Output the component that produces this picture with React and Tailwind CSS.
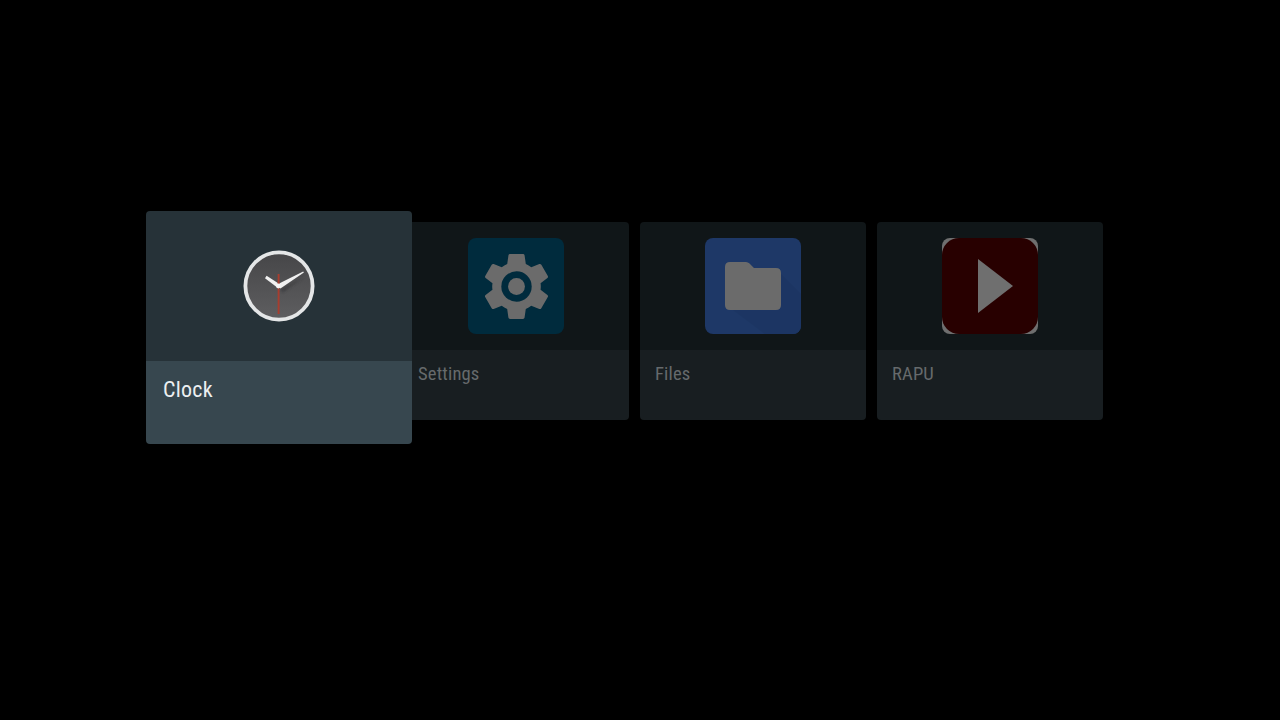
const GEAR = "M19.14 12.94c.04-.3.06-.61.06-.94 0-.32-.02-.64-.07-.94l2.03-1.58c.18-.14.23-.41.12-.61l-1.92-3.32c-.12-.22-.37-.29-.59-.22l-2.39.96c-.5-.38-1.03-.7-1.62-.94l-.36-2.54c-.04-.24-.24-.41-.48-.41h-3.84c-.24 0-.43.17-.47.41l-.36 2.54c-.59.24-1.13.57-1.62.94l-2.39-.96c-.22-.08-.47 0-.59.22L2.74 8.87c-.12.21-.08.47.12.61l2.03 1.58c-.05.3-.09.63-.09.94s.02.64.07.94l-2.03 1.58c-.18.14-.23.41-.12.61l1.92 3.32c.12.22.37.29.59.22l2.39-.96c.5.38 1.03.7 1.62.94l.36 2.54c.05.24.24.41.48.41h3.84c.24 0 .44-.17.47-.41l.36-2.54c.59-.24 1.13-.56 1.62-.94l2.39.96c.22.08.47 0 .59-.22l1.92-3.32c.12-.22.07-.47-.12-.61l-2.01-1.58z";

function ClockIcon() {
  return (
    <svg width="80" height="80" viewBox="0 0 80 80">
      <defs>
        <linearGradient id="face" x1="0" y1="0" x2="0" y2="1">
          <stop offset="0" stopColor="#464648" />
          <stop offset="1" stopColor="#5e5e60" />
        </linearGradient>
        <filter id="ring" x="-10%" y="-10%" width="120%" height="120%"><feGaussianBlur stdDeviation="0.7" /></filter>
        <filter id="soft" x="-30%" y="-30%" width="160%" height="160%"><feGaussianBlur stdDeviation="0.5" /></filter>
        <filter id="shadow" x="-30%" y="-30%" width="160%" height="160%"><feGaussianBlur stdDeviation="1.6" /></filter>
      </defs>
      <circle cx="40" cy="40" r="33" fill="url(#face)" />
      <path d="M41 44 L66 30 L44 46 Z" fill="#2c2c2e" opacity="0.6" filter="url(#shadow)" />
      <circle cx="40" cy="40" r="33.6" fill="none" stroke="#e4e6e7" strokeWidth="3.8" filter="url(#ring)" />
      <g filter="url(#soft)">
        <path d="M37.6 38.8 L64.2 25.4 L64.9 26.6 L41.4 42.6 Z" fill="#f0f0f0" />
        <path d="M41.2 38.6 L27.6 29.8 L26 32.2 L38.6 41.8 Z" fill="#f0f0f0" />
        <path d="M39.6 28 V68" stroke="#a83c2e" strokeWidth="1.9" />
        <circle cx="39.4" cy="40" r="2.4" fill="#f4f4f4" />
      </g>
    </svg>
  );
}

function SettingsIcon() {
  return (
    <div className="w-24 h-24 rounded-lg bg-[#002b3d] flex items-center justify-center">
      <svg width="81" height="81" viewBox="0 0 24 24">
        <path d={GEAR} fill="#6b6b6b" />
        <circle cx="12" cy="12" r="4.5" fill="#002b3d" />
        <circle cx="12" cy="12" r="2.5" fill="#6b6b6b" />
      </svg>
    </div>
  );
}

function FilesIcon() {
  return (
    <div className="w-24 h-24 rounded-lg bg-[#1e3867] overflow-hidden">
      <svg width="96" height="96" viewBox="0 0 96 96">
        <path d="M76 36 L96 56 V96 H60 L20 66 Z" fill="#1c3563" />
        <path d="M25 24 H41 Q43 24 44.5 25.5 L49 30 H71 Q76 30 76 35 V67 Q76 72 71 72 H25 Q20 72 20 67 V29 Q20 24 25 24 Z" fill="#6b6b6b" />
      </svg>
    </div>
  );
}

function RapuIcon() {
  return (
    <div className="w-24 h-24 rounded-lg bg-[#6f6f6f] overflow-hidden">
      <svg width="96" height="96" viewBox="0 0 96 96">
        <rect x="0" y="0" width="96" height="96" rx="17" fill="#280000" />
        <path d="M36 21 L71 48 L36 75 Z" fill="#6f6f6f" />
      </svg>
    </div>
  );
}

function Card({ label, icon }) {
  return (
    <div className="w-[226px] h-[198px] mt-[11px] rounded-sm overflow-hidden flex flex-col shrink-0">
      <div className="h-[128px] bg-[#101618] flex items-center justify-center">{icon}</div>
      <div className="flex-1 bg-[#181e21] pl-[15px] pt-[12px] text-[18.6px] leading-[24px] tracking-[0.15px] text-[#666a6c] font-stretch-condensed">{label}</div>
    </div>
  );
}

export default function App() {
  return (
    <div className="w-[1280px] h-[720px] bg-black pt-[211px] pl-[146px] flex items-start gap-[11px] overflow-hidden font-['Roboto',sans-serif]">
      <div className="w-[266px] h-[233px] -mr-5 relative z-10 rounded-sm overflow-hidden flex flex-col shrink-0">
        <div className="h-[150px] bg-[#263238] flex items-center justify-center"><ClockIcon /></div>
        <div className="flex-1 bg-[#37474f] pl-[17px] pt-[14px] text-[22px] leading-[30px] tracking-[0.25px] text-[#eceff1] font-stretch-condensed">Clock</div>
      </div>
      <Card label="Settings" icon={<SettingsIcon />} />
      <Card label="Files" icon={<FilesIcon />} />
      <Card label="RAPU" icon={<RapuIcon />} />
    </div>
  );
}
